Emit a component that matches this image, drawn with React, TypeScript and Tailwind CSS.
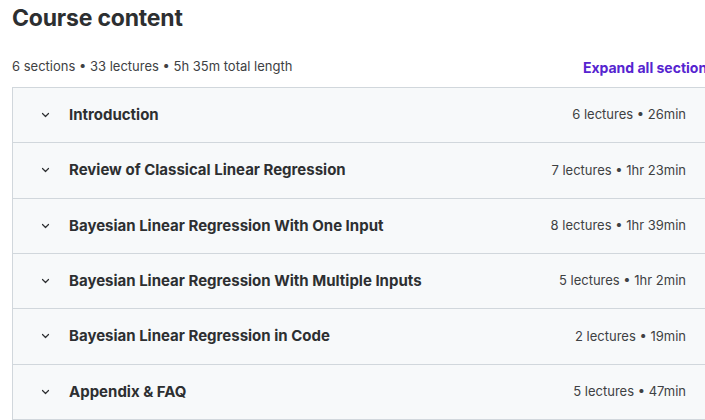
import React from 'react';

type Section = { title: string; lectures: number; length: string };

const sections: Section[] = [
  { title: 'Introduction', lectures: 6, length: '26min' },
  { title: 'Review of Classical Linear Regression', lectures: 7, length: '1hr 23min' },
  { title: 'Bayesian Linear Regression With One Input', lectures: 8, length: '1hr 39min' },
  { title: 'Bayesian Linear Regression With Multiple Inputs', lectures: 5, length: '1hr 2min' },
  { title: 'Bayesian Linear Regression in Code', lectures: 2, length: '19min' },
  { title: 'Appendix & FAQ', lectures: 5, length: '47min' },
];

function Chevron() {
  return (
    <svg width="16" height="16" viewBox="0 0 16 16" className="shrink-0 text-[#2d2f31]">
      <path d="M5.5 6.5 L8.5 9.5 L11.5 6.5" fill="none" stroke="currentColor" strokeWidth="1.2" strokeLinecap="round" strokeLinejoin="round" />
    </svg>
  );
}

function SectionRow({ section }: { section: Section }) {
  return (
    <div className="h-[55.33px] flex items-center border-t border-[#d1d7dc] bg-[#f7f9fa] pl-6 pr-6">
      <Chevron />
      <span className="ml-4 text-[15px] font-bold text-[#2d2f31] flex-1">{section.title}</span>
      <span className="text-[13px] text-[#3e4143]">
        {section.lectures} lectures • {section.length}
      </span>
    </div>
  );
}

export default function App() {
  return (
    <div className="w-[705px] h-[420px] overflow-hidden bg-white text-[#2d2f31] font-['Inter',sans-serif]">
      <div className="w-[711px] pl-3">
        <h2 className="text-[23px] leading-[36px] font-bold tracking-[-0.2px]">Course content</h2>
        <div className="flex items-center justify-between mt-[19px] h-[24px]">
          <span className="text-[13px] text-[#3e4143]">6 sections • 33 lectures • 5h 35m total length</span>
          <span className="text-[14px] font-bold text-[#5624d0] mr-[-4px]">Expand all sections</span>
        </div>
        <div className="mt-[8px] border-l border-r border-b border-[#d1d7dc]">
          {sections.map((s) => (
            <SectionRow key={s.title} section={s} />
          ))}
        </div>
      </div>
    </div>
  );
}
